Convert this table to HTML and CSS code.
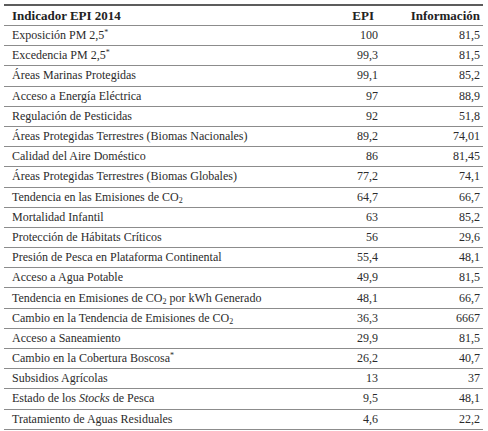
FILE: index.html
```html
<!DOCTYPE html>
<html lang="es">
<head>
<meta charset="utf-8">
<title>Indicador EPI 2014</title>
<link rel="stylesheet" href="styles.css">
</head>
<body>
<table class="epi">
  <colgroup><col class="c-name"><col class="c-epi"><col class="c-info"></colgroup>
  <thead>
    <tr><th class="name">Indicador EPI 2014</th><th class="epi-col head-epi">EPI</th><th class="info-col">Información</th></tr>
  </thead>
  <tbody>
    <tr><td class="name">Exposición PM 2,5<sup>*</sup></td><td class="epi-col">100</td><td class="info-col">81,5</td></tr>
    <tr><td class="name">Excedencia PM 2,5<sup>*</sup></td><td class="epi-col">99,3</td><td class="info-col">81,5</td></tr>
    <tr><td class="name">Áreas Marinas Protegidas</td><td class="epi-col">99,1</td><td class="info-col">85,2</td></tr>
    <tr><td class="name">Acceso a Energía Eléctrica</td><td class="epi-col">97</td><td class="info-col">88,9</td></tr>
    <tr><td class="name">Regulación de Pesticidas</td><td class="epi-col">92</td><td class="info-col">51,8</td></tr>
    <tr><td class="name">Áreas Protegidas Terrestres (Biomas Nacionales)</td><td class="epi-col">89,2</td><td class="info-col">74,01</td></tr>
    <tr><td class="name">Calidad del Aire Doméstico</td><td class="epi-col">86</td><td class="info-col">81,45</td></tr>
    <tr><td class="name">Áreas Protegidas Terrestres (Biomas Globales)</td><td class="epi-col">77,2</td><td class="info-col">74,1</td></tr>
    <tr><td class="name">Tendencia en las Emisiones de CO<sub>2</sub></td><td class="epi-col">64,7</td><td class="info-col">66,7</td></tr>
    <tr><td class="name">Mortalidad Infantil</td><td class="epi-col">63</td><td class="info-col">85,2</td></tr>
    <tr><td class="name">Protección de Hábitats Críticos</td><td class="epi-col">56</td><td class="info-col">29,6</td></tr>
    <tr><td class="name">Presión de Pesca en Plataforma Continental</td><td class="epi-col">55,4</td><td class="info-col">48,1</td></tr>
    <tr><td class="name">Acceso a Agua Potable</td><td class="epi-col">49,9</td><td class="info-col">81,5</td></tr>
    <tr><td class="name">Tendencia en Emisiones de CO<sub>2</sub> por kWh Generado</td><td class="epi-col">48,1</td><td class="info-col">66,7</td></tr>
    <tr><td class="name">Cambio en la Tendencia de Emisiones de CO<sub>2</sub></td><td class="epi-col">36,3</td><td class="info-col">6667</td></tr>
    <tr><td class="name">Acceso a Saneamiento</td><td class="epi-col">29,9</td><td class="info-col">81,5</td></tr>
    <tr><td class="name">Cambio en la Cobertura Boscosa<sup>*</sup></td><td class="epi-col">26,2</td><td class="info-col">40,7</td></tr>
    <tr><td class="name">Subsidios Agrícolas</td><td class="epi-col">13</td><td class="info-col">37</td></tr>
    <tr><td class="name">Estado de los <em>Stocks</em> de Pesca</td><td class="epi-col">9,5</td><td class="info-col">48,1</td></tr>
    <tr><td class="name">Tratamiento de Aguas Residuales</td><td class="epi-col">4,6</td><td class="info-col">22,2</td></tr>
  </tbody>
</table>
</body>
</html>
```
FILE: styles.css
```css
html, body {
  margin: 0;
  padding: 0;
  background: #ffffff;
}

body {
  padding: 4px 5px 0 4px;
  color: #2b2b2b;
}

.epi {
  width: 479px;
  border-collapse: collapse;
  border-top: 2px solid #5c5c5c;
  table-layout: fixed;
  font-family: "Liberation Serif", "Times New Roman", serif;
  font-size: 12px;
}

.c-name { width: 290px; }
.c-epi { width: 84px; }
.c-info { width: 105px; }

.epi th,
.epi td {
  height: 19.2px;
  padding: 0;
  border-bottom: 1px solid #8c8c8c;
  line-height: 19px;
  white-space: nowrap;
  vertical-align: middle;
}

.epi thead th {
  height: 19px;
  font-weight: bold;
  font-size: 13px;
  color: #222222;
}

.name {
  text-align: left;
  padding-left: 8px !important;
}

.epi-col {
  text-align: right;
}

.epi thead .head-epi {
  padding-right: 4px;
}

.info-col {
  text-align: right;
  padding-right: 3px !important;
}

sup {
  font-size: 8px;
  line-height: 0;
  vertical-align: 4px;
}

sub {
  font-size: 8px;
  line-height: 0;
  vertical-align: -2px;
}

em {
  font-style: italic;
}
```
